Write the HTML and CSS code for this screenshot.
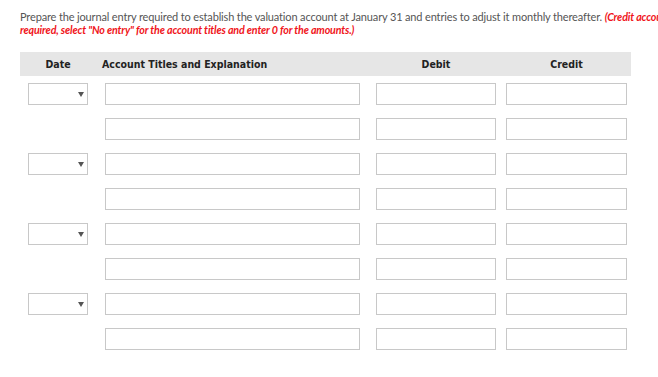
FILE: index.html
```html
<!DOCTYPE html>
<html lang="en">
<head>
    <meta charset="UTF-8">
    <meta name="viewport" content="width=device-width, initial-scale=1.0">
    <title>Journal Entry</title>
    <link rel="stylesheet" href="styles.css">
</head>
<body>
    <div class="question">
        <p class="prompt">Prepare the journal entry required to establish the valuation account at January 31 and entries to adjust it monthly thereafter. <em class="note">(Credit account titles are automatically indented when amount is entered. Do not indent manually. If no entry is<br>required, select "No entry" for the account titles and enter 0 for the amounts.)</em></p>

        <div class="journal">
            <div class="head">
                <div class="h-date">Date</div>
                <div class="h-account">Account Titles and Explanation</div>
                <div class="h-amount">Debit</div>
                <div class="h-amount h-credit">Credit</div>
            </div>

            <div class="rows">
                <div class="row">
                    <div class="cell-date"><div class="date-select"><svg class="arrow" width="6" height="5" viewBox="0 0 6 5"><path d="M0 0H6L3 5Z"/></svg></div></div>
                    <div class="cell-account"><input type="text"></div>
                    <div class="cell-debit"><input type="text"></div>
                    <div class="cell-credit"><input type="text"></div>
                </div>
                <div class="row">
                    <div class="cell-date"></div>
                    <div class="cell-account"><input type="text"></div>
                    <div class="cell-debit"><input type="text"></div>
                    <div class="cell-credit"><input type="text"></div>
                </div>

                <div class="row">
                    <div class="cell-date"><div class="date-select"><svg class="arrow" width="6" height="5" viewBox="0 0 6 5"><path d="M0 0H6L3 5Z"/></svg></div></div>
                    <div class="cell-account"><input type="text"></div>
                    <div class="cell-debit"><input type="text"></div>
                    <div class="cell-credit"><input type="text"></div>
                </div>
                <div class="row">
                    <div class="cell-date"></div>
                    <div class="cell-account"><input type="text"></div>
                    <div class="cell-debit"><input type="text"></div>
                    <div class="cell-credit"><input type="text"></div>
                </div>

                <div class="row">
                    <div class="cell-date"><div class="date-select"><svg class="arrow" width="6" height="5" viewBox="0 0 6 5"><path d="M0 0H6L3 5Z"/></svg></div></div>
                    <div class="cell-account"><input type="text"></div>
                    <div class="cell-debit"><input type="text"></div>
                    <div class="cell-credit"><input type="text"></div>
                </div>
                <div class="row">
                    <div class="cell-date"></div>
                    <div class="cell-account"><input type="text"></div>
                    <div class="cell-debit"><input type="text"></div>
                    <div class="cell-credit"><input type="text"></div>
                </div>

                <div class="row">
                    <div class="cell-date"><div class="date-select"><svg class="arrow" width="6" height="5" viewBox="0 0 6 5"><path d="M0 0H6L3 5Z"/></svg></div></div>
                    <div class="cell-account"><input type="text"></div>
                    <div class="cell-debit"><input type="text"></div>
                    <div class="cell-credit"><input type="text"></div>
                </div>
                <div class="row">
                    <div class="cell-date"></div>
                    <div class="cell-account"><input type="text"></div>
                    <div class="cell-debit"><input type="text"></div>
                    <div class="cell-credit"><input type="text"></div>
                </div>
            </div>
        </div>
    </div>
</body>
</html>
```

FILE: styles.css
```css
html, body {
    overflow: hidden;
}

body {
    margin: 0;
    padding: 0;
    background-color: #fff;
    font-family: Lato, "Liberation Sans", sans-serif;
}

.question {
    padding: 10px 0 0 20px;
}

.prompt {
    margin: 0;
    font-size: 11px;
    line-height: 13px;
    color: #555;
    letter-spacing: -0.15px;
    white-space: nowrap;
}

.note {
    color: #f0141a;
    font-size: 10.7px;
    font-weight: bold;
}

.journal {
    width: 611px;
    margin-top: 16px;
}

.head,
.row {
    display: grid;
    grid-template-columns: 85px 263px 138px 125px;
}

.head {
    height: 24px;
    align-items: center;
    background-color: #e6e6e6;
    font-family: "DejaVu Sans Condensed", "DejaVu Sans", Verdana, sans-serif;
    font-size: 10.5px;
    font-weight: bold;
    color: #222;
}

.h-date {
    width: 60px;
    padding-left: 8px;
    text-align: center;
}

.h-account {
    margin-left: -3px;
}

.h-amount {
    width: 120px;
    padding-left: 8px;
    text-align: center;
}

.h-credit {
    padding-left: 0;
    width: 121px;
}

.rows {
    display: flex;
    flex-direction: column;
    gap: 13px;
    padding-top: 7px;
}

.cell-date,
.cell-debit {
    padding-left: 8px;
}

.cell-date {
    height: 22px;
}

.date-select {
    width: 60px;
    height: 22px;
    box-sizing: border-box;
    border: 1px solid #c8c8c8;
    background-color: #fff;
    display: flex;
    align-items: center;
    justify-content: flex-end;
    padding-right: 3px;
}

.arrow {
    display: block;
    fill: #555;
}

input[type="text"] {
    display: block;
    box-sizing: border-box;
    height: 22px;
    margin: 0;
    padding: 0 4px;
    border: 1px solid #c8c8c8;
    border-radius: 0;
    background-color: #fff;
}

.cell-account input {
    width: 255px;
}

.cell-debit input {
    width: 120px;
}

.cell-credit input {
    width: 121px;
}
```
